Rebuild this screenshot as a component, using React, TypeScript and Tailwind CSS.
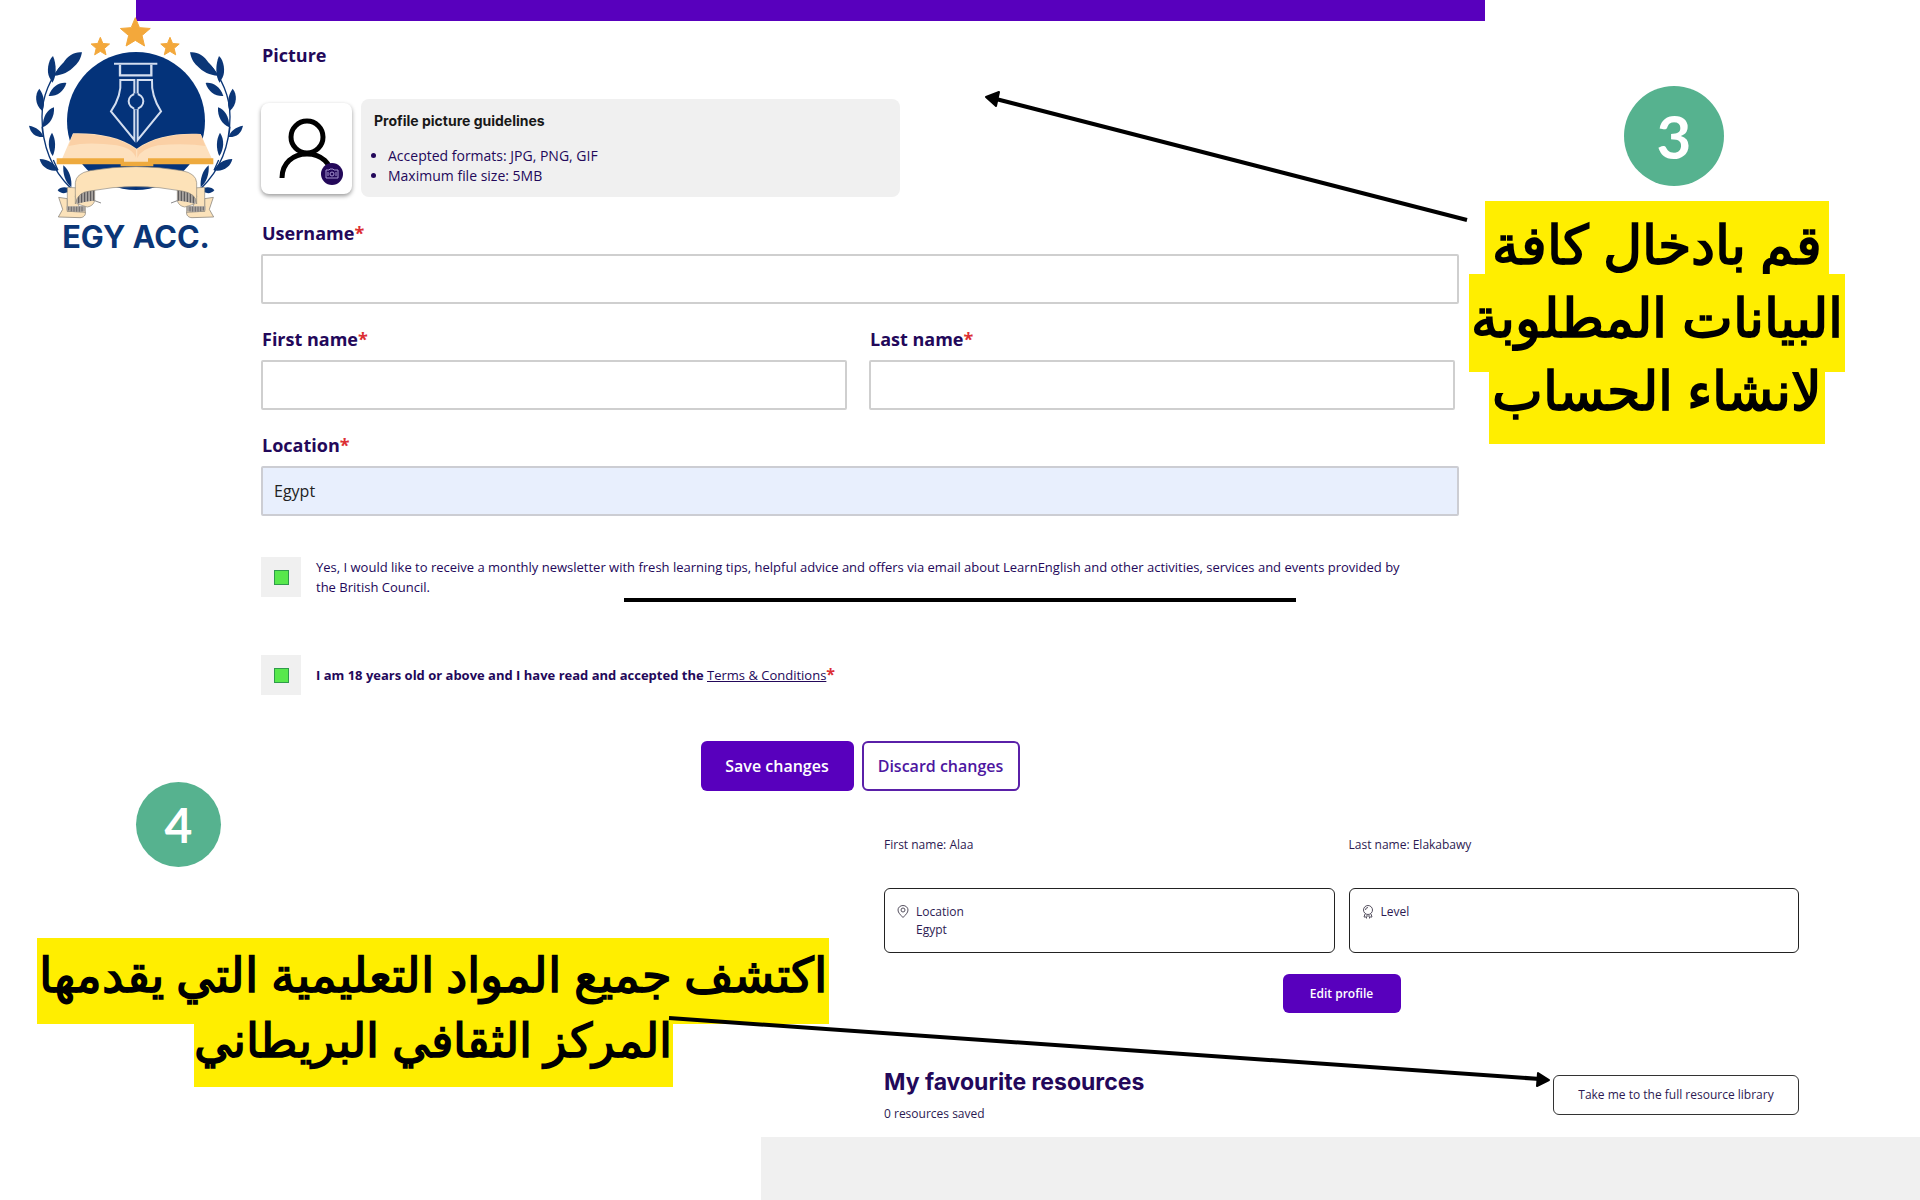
import type { ReactNode } from "react";

const FONT = "font-['Open_Sans','Noto_Sans',sans-serif]";

function Star({ cx, cy, r }: { cx: number; cy: number; r: number }) {
  const points = Array.from({ length: 10 }, (_, i) => {
    const radius = i % 2 === 0 ? r : r * 0.45;
    const angle = (Math.PI / 5) * i - Math.PI / 2;
    return `${cx + radius * Math.cos(angle)},${cy + radius * Math.sin(angle)}`;
  }).join(" ");
  return <polygon points={points} fill="#f3a83b" stroke="#f3a83b" strokeWidth="3" strokeLinejoin="round" />;
}

function LaurelAndRibbon() {
  return (
    <g>
      <g fill="#0b3677">
        <path d="M246 157C226 154 204 166 190 188C178 200 168 212 163 227C186 226 208 216 224 198C238 186 243 172 246 157Z" />
        <path d="M159 168C143 182 140 216 148 232L157 248C170 232 170 192 159 168Z" />
        <path d="M199 249C180 246 156 258 146 288C168 290 192 276 199 249Z" />
        <path d="M118 266C104 282 104 314 127 333C136 312 132 284 118 266Z" />
        <path d="M162 322C142 328 128 350 128 382C150 374 164 350 162 322Z" />
        <path d="M87 377C92 400 106 412 130 411C126 394 108 380 87 377Z" />
        <path d="M156 398C142 418 144 448 158 468C168 448 168 418 156 398Z" />
        <path d="M119 477C124 500 146 516 174 511C166 492 146 478 119 477Z" />
        <path d="M190 496C188 522 196 548 214 562C216 536 208 510 190 496Z" />
        <path d="M173 571C178 562 194 560 204 564L204 576C194 582 180 580 173 571Z" />
      </g>
      <path
        d="M192 190C150 232 126 290 126 350C126 440 156 510 214 566M130 411L126 380M174 511L160 480"
        fill="none"
        stroke="#0b3677"
        strokeWidth="4"
      />
      <path d="M176 592L202 596V634L256 636C258 646 250 653 240 653L175 651L188 628Z" fill="#fbe2ba" stroke="#77736c" strokeWidth="2" />
      <path d="M202 562L236 564V620H256V636L202 634Z" fill="#fbe2ba" stroke="#8d877c" strokeWidth="2" />
      <path d="M200 619H256V633Q228 640 200 630Z" fill="#a9a4a0" />
      <path d="M206 620V632M214 620V634M222 620V635M230 620V635M238 620V635M246 620V634" stroke="#4f4d50" strokeWidth="2" />
      <path d="M226 590Q228 576 250 572L284 570V602Q280 618 262 621L232 612Z" fill="#fbe2ba" stroke="#8d877c" strokeWidth="2" />
      <path d="M228 590Q236 574 284 570V602Q250 604 230 613Z" fill="#a9a4a0" />
      <path d="M236 584V610M245 578V608M254 575V606M263 573V604M272 572V603M281 571V602" stroke="#4f4d50" strokeWidth="3" />
      <path d="M284 602L303 609" stroke="#4f4d50" strokeWidth="2" />
    </g>
  );
}

function Logo() {
  return (
    <svg viewBox="0 0 780 810" className="h-[270px] w-[260px]" role="img" aria-label="EGY ACC.">
      <circle cx="408" cy="363" r="207" fill="#04337a" />
      <Star cx={406} cy={100} r={47} />
      <Star cx={301} cy={141} r={29} />
      <Star cx={510} cy={141} r={29} />
      <g fill="none" stroke="#d3def0" strokeWidth="6">
        <path d="M342 191H472" />
        <path d="M360 194V226H454V194" strokeWidth="7" />
        <path d="M403 284V240H361C364 272 354 304 333 334L403 420V324" />
        <path d="M413 284V240H456C454 272 464 304 483 334L413 420V324" />
        <circle cx="408" cy="304" r="22" />
      </g>
      <path d="M403 284h10M403 324h10" stroke="#04337a" strokeWidth="8" />
      <path d="M219 400C290 398 360 410 410 446C460 410 530 398 602 402L636 477L444 486H374L186 477Z" fill="#fde0bd" />
      <path d="M219 402C290 400 360 412 408 448V474Q400 446 350 436Q290 428 240 432L206 438Z" fill="#fbd0a5" />
      <path d="M602 402C530 400 460 412 412 448V474Q424 446 474 436Q530 430 584 434L616 438Z" fill="#fbd0a5" />
      <path d="M170 475H372V485H444V475H640V493H460V499H362V493H170Z" fill="#eeaa3e" />
      <LaurelAndRibbon />
      <g transform="translate(816 0) scale(-1 1)">
        <LaurelAndRibbon />
      </g>
      <path
        d="M226 588V548Q228 520 270 512Q408 488 546 512Q588 520 590 548V612Q590 580 546 573Q408 546 270 573Q232 576 226 612Z"
        fill="#fde2b8"
        stroke="#8d877c"
        strokeWidth="2"
      />
      <text x="408" y="745" textAnchor="middle" fill="#0b3677" fontSize="92" fontWeight="700" fontFamily="Inter, sans-serif">
        EGY ACC.
      </text>
    </svg>
  );
}

function Required() {
  return <span className="text-[#dc2f34]">*</span>;
}

function Field({ id, label, value = "", filled = false }: { id: string; label: string; value?: string; filled?: boolean }) {
  return (
    <div className="flex min-w-0 flex-1 flex-col gap-[9px]">
      <label htmlFor={id} className="self-start pl-px text-lg leading-6 font-bold">
        {label}
        <Required />
      </label>
      <input
        id={id}
        defaultValue={value}
        className={
          filled
            ? "h-[50px] w-full rounded-xs border-2 border-[#cccdd3] bg-[#e8effd] px-[11px] text-base text-[#222]"
            : "h-[50px] w-full rounded-xs border-2 border-[#cfcfcf] bg-white px-[11px] text-base text-[#222]"
        }
      />
    </div>
  );
}

function Tick({ id, children }: { id: string; children: ReactNode }) {
  return (
    <div className="flex gap-[15px]">
      <span className="flex size-10 shrink-0 items-center justify-center bg-[#f0f0f0]">
        <input
          id={id}
          type="checkbox"
          defaultChecked
          className="size-[15px] appearance-none border border-[#2f9b4b] bg-white checked:bg-[#58e84c]"
        />
      </span>
      {children}
    </div>
  );
}

function AvatarCard() {
  return (
    <button type="button" aria-label="Change picture" className="mt-1 size-[91px] shrink-0 rounded-lg bg-white shadow-[0_2px_4px_rgba(0,0,0,0.4)]">
      <svg viewBox="0 0 91 91" className="size-full" fill="none">
        <circle cx="46" cy="34" r="16" stroke="#000" strokeWidth="5" />
        <path d="M21 75C21 60 32 51 46 51S71 60 71 75" stroke="#000" strokeWidth="5" />
        <circle cx="71" cy="71" r="11" fill="#230859" />
        <g stroke="#a695d0" strokeWidth="1">
          <path d="M65 67h3l1-1h3l1 1h4v8H65z" />
          <circle cx="71" cy="71" r="2" />
          <path d="M67 69v4M75 69v4" />
        </g>
      </svg>
    </button>
  );
}

function StepBadge({ step, large = false }: { step: number; large?: boolean }) {
  return (
    <div
      className={
        large
          ? "flex size-[100px] items-center justify-center rounded-full bg-[#56b28f] font-[Lato,sans-serif] text-6xl leading-none font-bold text-white"
          : "flex size-[85px] items-center justify-center rounded-full bg-[#56b28f] font-[Lato,sans-serif] text-5xl leading-none font-bold text-white"
      }
    >
      {step}
    </div>
  );
}

function PinIcon() {
  return (
    <svg viewBox="0 0 12 14" className="h-3.5 w-3 shrink-0" fill="none" stroke="#55505f">
      <path d="M6 12.500C3.500 9.800 1 7.800 1 5a5 4.500 0 0 1 10 0c0 2.800-2.500 4.800-5 7.500z" />
      <circle cx="6" cy="5" r="2" />
    </svg>
  );
}

function AwardIcon() {
  return (
    <svg viewBox="0 0 12 14" className="h-3.5 w-3 shrink-0" fill="none" stroke="#55505f">
      <circle cx="6" cy="5" r="4.500" />
      <path d="M3.500 5a2.500 2.500 0 0 1 2.500-2.500M3 9l-1 3h2.500v1.500M9 9l1 3H7.500v1.500M4 11h4" />
    </svg>
  );
}

function Arrows() {
  return (
    <svg viewBox="0 0 1920 1200" className="pointer-events-none absolute top-0 left-0 h-[1200px] w-[1920px]" stroke="#000" strokeWidth="4" aria-hidden="true">
      <path d="M1467 220L996 99" />
      <path d="M986 97L999 92L996 106Z" strokeLinejoin="round" strokeWidth="2" />
      <path d="M624 600H1296" />
      <path d="M669 1018L1540 1079" />
      <path d="M1549 1080L1538 1073L1537 1086Z" strokeLinejoin="round" strokeWidth="2" />
    </svg>
  );
}

export default function App() {
  return (
    <div className={`relative min-h-screen overflow-hidden bg-white text-[#23085a] ${FONT}`}>
      <header className="mr-[435px] ml-[136px] h-[21px] bg-[#5800bd]" />
      <div className="absolute top-0 left-0">
        <Logo />
      </div>

      <div className="flex items-start">
        <form className="ml-[261px] min-w-0 flex-1 pt-[22px]" onSubmit={(e) => e.preventDefault()}>
          <h2 className="pl-px text-lg leading-6 font-bold">Picture</h2>
          <div className="mt-8 flex gap-[9px]">
            <AvatarCard />
            <div className="h-[98px] w-[539px] rounded-lg bg-[#f0f0f0] px-[13px] pt-3">
              <h3 className="font-[Inter,sans-serif] text-sm leading-5 font-bold text-[#181818]">Profile picture guidelines</h3>
              <ul className="mt-[15px] list-disc pl-3.5 text-sm leading-5">
                <li>Accepted formats: JPG, PNG, GIF</li>
                <li>Maximum file size: 5MB</li>
              </ul>
            </div>
          </div>

          <div className="mt-6 flex flex-col gap-[23px]">
            <Field id="username" label="Username" />
            <div className="flex gap-[22px] pr-1">
              <Field id="first" label="First name" />
              <Field id="last" label="Last name" />
            </div>
            <Field id="location" label="Location" value="Egypt" filled />
          </div>

          <div className="mt-[41px] flex flex-col gap-[58px]">
            <Tick id="news">
              <label htmlFor="news" className="pr-10 text-[13px] leading-5">
                Yes, I would like to receive a monthly newsletter with fresh learning tips, helpful advice and offers via email about LearnEnglish and other activities, services and events provided by
                the British Council.
              </label>
            </Tick>
            <Tick id="terms">
              <label htmlFor="terms" className="self-center text-[13px] leading-5 font-bold">
                I am 18 years old or above and I have read and accepted the{" "}
                <a href="#terms" className="font-normal underline">
                  Terms &amp; Conditions
                </a>
                <span className="text-base leading-none">
                  <Required />
                </span>
              </label>
            </Tick>
          </div>

          <div className="mt-[46px] flex justify-center gap-2">
            <button type="submit" className="h-[50px] w-[153px] rounded-md bg-[#5800bd] text-base font-semibold text-white">
              Save changes
            </button>
            <button type="button" className="h-[50px] w-[158px] rounded-md border-2 border-[#5a20a8] text-base font-semibold text-[#4d16a0]">
              Discard changes
            </button>
          </div>
        </form>

        <aside className="mr-[65px] flex w-[396px] shrink-0 flex-col items-center pt-[65px]" aria-label="Step 3">
          <div className="flex justify-center pl-[34px]">
            <StepBadge step={3} large />
          </div>
          <p dir="rtl" lang="ar" className="mt-[15px] flex flex-col items-center text-[54px] leading-[84px] font-bold whitespace-nowrap text-black">
            <span className="flex h-[73px] w-[344px] justify-center bg-[#ffee00]">قم بادخال كافة</span>
            <span className="flex h-[98px] w-[376px] justify-center bg-[#ffee00]">البيانات المطلوبة</span>
            <span className="flex h-[72px] w-[336px] justify-center bg-[#ffee00] leading-[34px]">لانشاء الحساب</span>
          </p>
        </aside>
      </div>

      <div className="-mt-[9px] flex items-start">
        <aside className="flex w-[884px] shrink-0 flex-col pl-[37px]" aria-label="Step 4">
          <div className="pl-[99px]">
            <StepBadge step={4} />
          </div>
          <p dir="rtl" lang="ar" className="mt-[71px] flex w-[792px] flex-col items-center text-[48px] leading-[72px] font-bold whitespace-nowrap text-black">
            <span className="flex h-[86px] w-full justify-center bg-[#ffee00]">اكتشف جميع المواد التعليمية التي يقدمها</span>
            <span className="flex h-[63px] w-[479px] justify-center bg-[#ffee00] text-[47px] leading-[30px]">المركز الثقافي البريطاني</span>
          </p>
        </aside>

        <section className="mr-[121px] min-w-0 flex-1 pt-[54px] text-xs leading-[18px] text-[#2c1a52]">
          <div className="grid grid-cols-2 gap-x-3.5">
            <p>First name: Alaa</p>
            <p>Last name: Elakabawy</p>
            <div className="mt-[34px] flex h-[65px] gap-[7px] rounded-md border border-[#222] px-3 pt-[14px]">
              <span className="pt-0.5">
                <PinIcon />
              </span>
              <p>
                Location
                <br />
                Egypt
              </p>
            </div>
            <div className="mt-[34px] flex h-[65px] gap-[7px] rounded-md border border-[#222] px-3 pt-[14px]">
              <span className="pt-0.5">
                <AwardIcon />
              </span>
              <p>Level</p>
            </div>
          </div>
          <div className="mt-[21px] flex justify-center">
            <button type="button" className="h-[39px] w-[118px] rounded-md bg-[#5800bd] font-semibold text-white">
              Edit profile
            </button>
          </div>
          <div className="mt-[53px] flex items-start justify-between">
            <div>
              <h2 className="font-[Inter,sans-serif] text-[23px] leading-8 font-bold text-[#23085a]">My favourite resources</h2>
              <p className="mt-[7px]">0 resources saved</p>
            </div>
            <a href="#library" className="mt-[9px] flex h-[40px] w-[246px] items-center justify-center rounded-md border border-[#333]">
              Take me to the full resource library
            </a>
          </div>
        </section>
      </div>
      <footer className="mt-[14px] ml-[761px] h-16 bg-[#f0f0f0]" />
      <Arrows />
    </div>
  );
}
